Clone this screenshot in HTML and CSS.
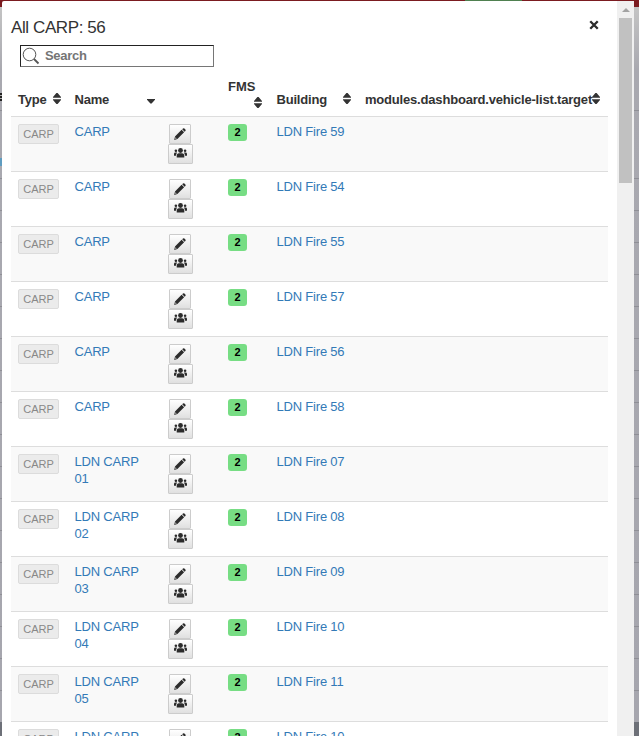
FILE: index.html
```html
<!DOCTYPE html>
<html lang="en">
<head>
<meta charset="utf-8">
<title>All CARP</title>
<link rel="stylesheet" href="styles.css">
</head>
<body>
<svg class="defs" aria-hidden="true">
  <symbol id="sort" viewBox="0 0 8 11"><path d="M0 4.8V4L3.4 0h1.2L8 4v.8ZM0 6.2h8V7L4.6 11H3.4L0 7Z"/></symbol>
  <symbol id="down" viewBox="0 0 8 5"><path d="M0 0h8v.8L4.6 4.6H3.4L0 .8Z"/></symbol>
  <symbol id="pencil" viewBox="0 0 12 12"><path d="M8.2 1.2 9 .5Q9.7 0 10.4.6l1 1q.6.7 0 1.4l-.8.8ZM7.6 1.8l2.5 2.5L3.4 11 .2 11.9 1 8.5ZM1.6 9.2l-.4 1.6 1.5-.4Z" fill-rule="evenodd"/></symbol>
  <symbol id="users" viewBox="0 0 13 10"><circle cx="6.5" cy="2.5" r="2.4"/><circle cx="1.9" cy="2.7" r="1.3"/><circle cx="11.1" cy="2.7" r="1.3"/><path d="M2.7 9.6V8Q2.7 5.2 5 5.2h3Q10.3 5.2 10.3 8v1.6ZM0 7.8V6Q0 4.6 1.4 4.6h1.8Q2 6 2 7.8ZM13 7.8V6q0-1.4-1.4-1.4H9.800Q11 6 11 7.800Z"/></symbol>
</svg>
<div class="navbar"><span class="nav-active"></span></div>
<div class="menu-edge"></div>
<div class="link-edge"></div>
<main class="modal">
  <div class="content">
    <header class="head">
      <h1>All CARP: 56</h1>
      <button class="close" aria-label="Close"><svg viewBox="0 0 8 8"><path d="M1 1 7 7M7 1 1 7"/></svg></button>
    </header>
    <label class="search">
      <svg viewBox="0 0 18 18"><circle cx="7.500" cy="7.500" r="6.300"/><path d="m12 12 4.500 4.500"/></svg>
      <input type="search" placeholder="Search">
    </label>
    <div class="row header">
      <span class="type-head">Type <svg class="sort"><use href="#sort"/></svg></span>
      <span class="name-head">Name <svg class="down"><use href="#down"/></svg></span>
      <span></span>
      <span class="fms-head">FMS <svg class="sort"><use href="#sort"/></svg></span>
      <span class="building-head">Building <svg class="sort"><use href="#sort"/></svg></span>
      <span class="target-head">modules.dashboard.vehicle-list.target<svg class="sort"><use href="#sort"/></svg></span>
    </div>
    <div id="vehicles"></div>
  </div>
  <div class="scrollbar"><span class="arrow"></span><span class="thumb"></span></div>
</main>
<script src="app.js"></script>
</body>
</html>
```
FILE: styles.css
```css
* { box-sizing: border-box; }
body {
  margin: 0;
  height: 736px;
  overflow: hidden;
  position: relative;
  font: 14px/17px "Liberation Sans", Arial, sans-serif;
  color: #333;
  background:
    linear-gradient(#8f8f96, #8f8f96) 0 110px / 100% 1px no-repeat,
    repeating-linear-gradient(#8f8f96 0 1px, transparent 1px 32px) 0 178px / 100% 544px no-repeat,
    linear-gradient(#c4c4c4 7px, #a9a9b0 70px, #a6a6ae 722px, #6d7078 722px);
}
.defs { position: absolute; width: 0; height: 0; }
.navbar { position: absolute; inset: 0 0 auto; height: 7px; background: #7b1b20; }
.nav-active { position: absolute; left: 465px; width: 57px; height: 7px; background: #4f8050; }
.menu-edge { position: absolute; top: 93px; left: 0; width: 2px; height: 8px; background: repeating-linear-gradient(#222 0 2px, #aaa 2px 3px); }
.link-edge { position: absolute; top: 158px; left: 0; width: 2px; height: 8px; background: #5f9cc0; }
.modal {
  position: relative;
  display: flex;
  justify-content: space-between;
  width: 632px;
  height: 735px;
  margin: 1px 0 0 2px;
  background: #fff;
  border-radius: 2px 0 0;
  overflow: hidden;
}
.content { width: 597px; margin-left: 9px; }
.head { display: flex; justify-content: space-between; height: 44px; padding: 16px 9px 0 0; }
h1 { margin: 0; font-size: 17px; line-height: 21px; font-weight: 400; letter-spacing: -.4px; }
.close { width: 10px; height: 10px; margin-top: 3px; padding: 0; border: 0; background: none; }
.close svg { display: block; width: 10px; height: 10px; stroke: #2b2b2b; stroke-width: 1.9; }
.search {
  display: flex;
  align-items: center;
  width: 194px;
  height: 22px;
  margin-left: 9px;
  border: 1px solid #767676;
  border-top-color: #222;
  border-left-color: #222;
}
.search svg { width: 18px; height: 18px; margin-left: 1px; fill: none; stroke: #555; stroke-width: 1; }
.search path { stroke-width: 1.8; }
.search input { flex: 1; min-width: 0; margin: -2px 0 0; padding: 0 0 0 5px; border: 0; outline: 0; background: none; font: bold 13px "Liberation Sans", Arial, sans-serif; letter-spacing: -.3px; }
.search input::placeholder { color: #757575; opacity: 1; }
.row {
  display: grid;
  grid-template-columns: 56.5px 93.5px 60px 48.5px 88.5px 1fr;
  height: 55px;
  padding: 7px 0 0 7px;
  border-top: 1px solid #ddd;
}
.row:nth-child(odd) { background: #f9f9f9; }
.row.header { height: 49px; padding-top: 0; border: 0; background: none; align-items: end; padding-bottom: 8px; font-weight: 700; font-size: 13px; letter-spacing: -.19px; white-space: nowrap; }
.sort { width: 8px; height: 11px; fill: #333; }
.down { width: 8px; height: 5px; fill: #333; }
.type-head, .target-head { display: flex; align-items: center; }
.type-head { justify-content: space-between; padding-right: 14px; }
.type-head .sort, .target-head .sort { margin-top: -2px; }
.name-head, .building-head { display: flex; justify-content: space-between; align-items: center; padding-right: 13px; }
.building-head { padding-right: 14px; }
.building-head .sort { margin-top: -2px; }
.name-head .down { margin-top: 3px; }
.fms-head { display: flex; flex-direction: column; gap: 2px; width: 34px; letter-spacing: 0; }
.fms-head .sort { align-self: flex-end; }
.type {
  justify-self: start;
  width: 41px;
  height: 20px;
  border: 1px solid #dcdcdc;
  border-radius: 2px;
  background: #ebebeb;
  color: #888;
  font-size: 11px;
  line-height: 19px;
  text-align: center;
}
a { margin-top: -1px; color: #337ab7; font-size: 13px; letter-spacing: -.2px; text-decoration: none; }
.name { width: 74px; }
.actions { display: flex; flex-direction: column; width: 25px; }
.btn { display: grid; place-items: center; height: 20px; padding: 0; border: 1px solid #ccc; border-radius: 1px; background: linear-gradient(#fff, #e0e0e0); }
.edit { width: 22px; margin-left: 1px; }
.crew { width: 25px; }
.edit svg { width: 12px; height: 12px; fill: #2b2b2b; }
.crew svg { width: 13px; height: 10px; margin-top: -2px; fill: #2b2b2b; }
.status { width: 19px; height: 17px; border-radius: 3px; background: #77dd84; color: #000; font-weight: 700; font-size: 11px; line-height: 17px; text-align: center; }
.scrollbar { display: flex; flex-direction: column; align-items: center; width: 17px; background: #f0f0f0; }
.arrow { margin-top: 7px; border: 4px solid transparent; border-top: 0; border-bottom-color: #a3a3a3; }
.thumb { width: 13px; height: 165px; margin-top: 6px; background: #c1c1c1; }
```
FILE: app.js
```js
const vehicles = [
  ["CARP", "59"], ["CARP", "54"], ["CARP", "55"], ["CARP", "57"], ["CARP", "56"], ["CARP", "58"],
  ["LDN CARP 01", "07"], ["LDN CARP 02", "08"], ["LDN CARP 03", "09"],
  ["LDN CARP 04", "10"], ["LDN CARP 05", "11"], ["LDN CARP 06", "10"]
];
document.getElementById("vehicles").innerHTML = vehicles.map(([name, station]) => `
  <div class="row">
    <span class="type">CARP</span>
    <a class="name" href="#">${name}</a>
    <span class="actions">
      <button class="btn edit" aria-label="Edit"><svg><use href="#pencil"/></svg></button>
      <button class="btn crew" aria-label="Crew"><svg><use href="#users"/></svg></button>
    </span>
    <span class="status">2</span>
    <a href="#">LDN Fire ${station}</a>
  </div>`).join("");
```
